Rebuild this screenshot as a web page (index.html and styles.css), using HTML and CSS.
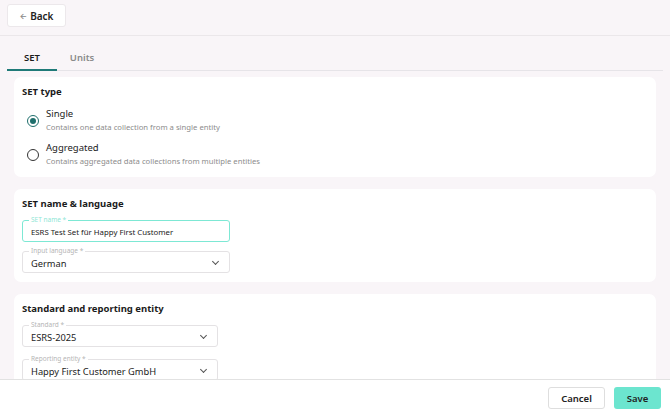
FILE: index.html
```html
<!DOCTYPE html>
<html lang="en">
<head>
    <meta charset="UTF-8">
    <meta name="viewport" content="width=device-width, initial-scale=1.0">
    <title>Edit SET</title>
    <link rel="stylesheet" href="styles.css">
</head>
<body>
    <header class="top-bar">
        <button class="back-btn"><span class="back-arrow">&larr;</span> Back</button>
    </header>

    <div class="tabs">
        <div class="tab active">SET</div>
        <div class="tab">Units</div>
    </div>

    <main class="content">
        <section class="card">
            <h2 class="tight">SET type</h2>
            <div class="radio-list">
                <label class="radio-row">
                    <span class="radio checked"></span>
                    <span class="radio-text">
                        <span class="radio-title">Single</span>
                        <span class="radio-desc">Contains one data collection from a single entity</span>
                    </span>
                </label>
                <label class="radio-row">
                    <span class="radio"></span>
                    <span class="radio-text">
                        <span class="radio-title">Aggregated</span>
                        <span class="radio-desc">Contains aggregated data collections from multiple entities</span>
                    </span>
                </label>
            </div>
        </section>

        <section class="card">
            <h2>SET name &amp; language</h2>
            <div class="field focused">
                <span class="field-label">SET name *</span>
                <span class="field-value small">ESRS Test Set für Happy First Customer</span>
            </div>
            <div class="field">
                <span class="field-label">Input language *</span>
                <span class="field-value">German</span>
                <span class="chevron"></span>
            </div>
        </section>

        <section class="card spaced">
            <h2>Standard and reporting entity</h2>
            <div class="field narrow">
                <span class="field-label">Standard *</span>
                <span class="field-value">ESRS-2025</span>
                <span class="chevron"></span>
            </div>
            <div class="field narrow">
                <span class="field-label">Reporting entity *</span>
                <span class="field-value">Happy First Customer GmbH</span>
                <span class="chevron"></span>
            </div>
        </section>
    </main>

    <footer class="footer">
        <button class="btn btn-cancel">Cancel</button>
        <button class="btn btn-save">Save</button>
    </footer>
</body>
</html>
```

FILE: styles.css
```css
body {
    font-family: "Noto Sans", Inter, sans-serif;
    margin: 0;
    background-color: #f9f5f8;
    color: #1b1b1b;
    height: 416px;
    overflow: hidden;
}

/* Top bar */
.top-bar {
    padding: 4px 7px 8px;
    border-bottom: 1px solid #ebe7ea;
}

.back-btn {
    display: flex;
    align-items: center;
    justify-content: center;
    gap: 3px;
    width: 59px;
    height: 23px;
    background-color: #ffffff;
    border: 1px solid #ece8eb;
    border-radius: 3px;
    font-family: inherit;
    font-size: 10px;
    font-weight: 600;
    color: #222;
    padding: 0;
}

.back-arrow {
    font-size: 8px;
    color: #888;
}

/* Tabs */
.tabs {
    display: flex;
    margin: 0 7px;
    border-bottom: 1px solid #e6e4e8;
    height: 34px;
}

.tab {
    width: 50px;
    display: flex;
    align-items: center;
    justify-content: center;
    font-size: 9.5px;
    font-weight: 600;
    color: #8a8a8a;
    border-bottom: 2px solid transparent;
    margin-bottom: -1px;
    padding-top: 10px;
}

.tab.active {
    color: #1b1b1b;
    border-bottom-color: #1f7a78;
}

/* Cards */
.content {
    padding: 6px 14px 0;
    display: flex;
    flex-direction: column;
    gap: 12px;
}

.card {
    background-color: #ffffff;
    border-radius: 7px;
    padding: 8px 8px 9px;
}

.card h2 {
    font-size: 9.5px;
    font-weight: 700;
    margin: 0 0 9px;
    line-height: 14px;
}

.card h2.tight {
    margin-bottom: 8px;
}

.radio-list {
    display: flex;
    flex-direction: column;
    gap: 7px;
    padding-left: 5px;
}

.radio-row {
    display: flex;
    align-items: center;
    gap: 7px;
}

.radio {
    width: 10px;
    height: 10px;
    border: 1.5px solid #333;
    border-radius: 50%;
    position: relative;
    flex-shrink: 0;
    margin-top: 1px;
}

.radio.checked {
    border-color: #1f6f6c;
}

.radio.checked::after {
    content: "";
    position: absolute;
    left: 2px;
    top: 2px;
    width: 6px;
    height: 6px;
    border-radius: 50%;
    background-color: #1f6f6c;
}

.radio-text {
    display: flex;
    flex-direction: column;
    gap: 1px;
}

.radio-title {
    font-size: 9.5px;
    line-height: 13px;
    color: #222;
}

.radio-desc {
    font-size: 7.7px;
    line-height: 13px;
    color: #8c8c8c;
}

/* Fields */
.field {
    position: relative;
    width: 208px;
    height: 22px;
    box-sizing: border-box;
    border: 1px solid #e4e2e4;
    border-radius: 3px;
    display: flex;
    align-items: center;
    padding: 0 8px;
    margin-top: 9px;
}

.spaced .field {
    margin-top: 12px;
}

.card h2 + .field,
.spaced h2 + .field {
    margin-top: 0;
}

.field.narrow {
    width: 196px;
}

.field.focused {
    border: 1.5px solid #7de8d4;
}

.field-label {
    position: absolute;
    top: -5px;
    left: 6px;
    padding: 0 2px;
    background-color: #ffffff;
    font-size: 6.5px;
    line-height: 8px;
    color: #b5b5b5;
}

.field.focused .field-label {
    color: #8fe6d6;
}

.field-value {
    font-size: 9.3px;
    color: #222;
    padding-top: 2px;
}

.field-value.small {
    font-size: 7.8px;
}

.chevron {
    margin-left: auto;
    width: 4px;
    height: 4px;
    border-right: 1px solid #555;
    border-bottom: 1px solid #555;
    transform: rotate(45deg);
    margin-top: -2px;
    margin-right: 3px;
}

/* Footer */
.footer {
    position: fixed;
    left: 0;
    right: 0;
    bottom: 0;
    height: 36px;
    background-color: #ffffff;
    border-top: 1px solid #e2e2e2;
    display: flex;
    justify-content: flex-end;
    align-items: center;
    gap: 9px;
    padding-right: 9px;
}

.btn {
    height: 22px;
    border-radius: 3px;
    font-family: inherit;
    font-size: 9.5px;
    font-weight: 600;
    color: #222;
    cursor: pointer;
}

.btn-cancel {
    width: 57px;
    background-color: #ffffff;
    border: 1px solid #dedede;
}

.btn-save {
    width: 47px;
    background-color: #6ce5cf;
    border: none;
}
```
